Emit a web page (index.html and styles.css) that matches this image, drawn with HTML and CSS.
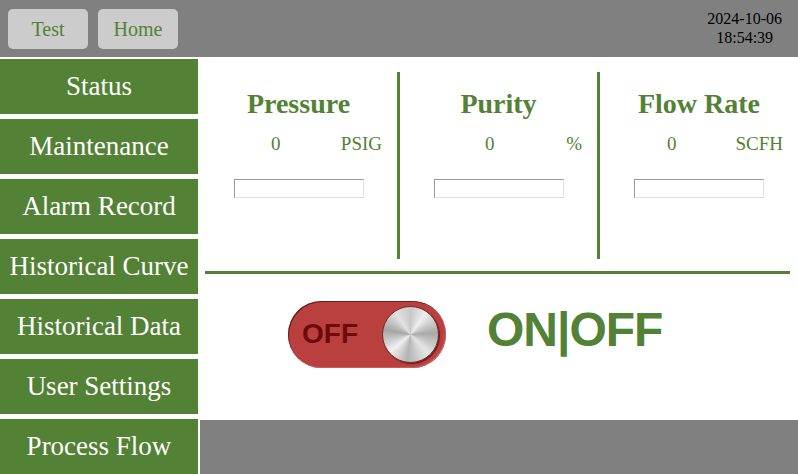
FILE: index.html
```html
<!DOCTYPE html>
<html>
<head>
<meta charset="utf-8">
<link rel="stylesheet" href="styles.css">
</head>
<body>
<div class="app">
  <header class="topbar">
    <div class="top-buttons">
      <button class="top-btn">Test</button>
      <button class="top-btn">Home</button>
    </div>
    <div class="clock">
      <div>2024-10-06</div>
      <div>18:54:39</div>
    </div>
  </header>
  <div class="body">
    <nav class="sidebar">
      <div class="nav-item">Status</div>
      <div class="nav-item">Maintenance</div>
      <div class="nav-item">Alarm Record</div>
      <div class="nav-item">Historical Curve</div>
      <div class="nav-item">Historical Data</div>
      <div class="nav-item">User Settings</div>
      <div class="nav-item">Process Flow</div>
    </nav>
    <main class="main">
      <div class="content">
        <div class="panels">
          <section class="panel panel--bordered">
            <h2 class="panel-title">Pressure</h2>
            <div class="readout readout--psig"><span>0</span><span>PSIG</span></div>
            <input class="field" type="text">
          </section>
          <section class="panel panel--bordered">
            <h2 class="panel-title">Purity</h2>
            <div class="readout readout--pct"><span>0</span><span>%</span></div>
            <input class="field" type="text">
          </section>
          <section class="panel">
            <h2 class="panel-title">Flow Rate</h2>
            <div class="readout readout--scfh"><span>0</span><span>SCFH</span></div>
            <input class="field" type="text">
          </section>
        </div>
        <div class="rule"></div>
        <div class="switch-row">
          <div class="switch">
            <span class="switch-label">OFF</span>
            <span class="knob"></span>
          </div>
          <div class="onoff">ON|OFF</div>
        </div>
      </div>
      <div class="footer"></div>
    </main>
  </div>
</div>
</body>
</html>
```
FILE: styles.css
```css
* { box-sizing: border-box; }
html, body { margin: 0; padding: 0; }
body {
  width: 798px;
  height: 474px;
  overflow: hidden;
  background: #ffffff;
  font-family: "Liberation Serif", "Times New Roman", serif;
}
.app {
  display: flex;
  flex-direction: column;
  height: 474px;
}
.topbar {
  height: 57px;
  background: #808080;
  display: flex;
  justify-content: space-between;
  align-items: flex-start;
  padding: 9px 16px 0 8px;
}
.top-buttons {
  display: flex;
  gap: 10px;
}
.top-btn {
  width: 80px;
  height: 40px;
  border: none;
  border-radius: 5px;
  background: #cccccc;
  color: #538135;
  font-family: "Liberation Serif", "Times New Roman", serif;
  font-size: 20px;
  padding: 0;
}
.clock {
  text-align: center;
  font-size: 16px;
  line-height: 19px;
  color: #000;
}
.body {
  flex: 1;
  display: flex;
  gap: 2px;
}
.sidebar {
  width: 198px;
  padding-top: 2px;
  display: flex;
  flex-direction: column;
  gap: 5px;
}
.nav-item {
  height: 55px;
  background: #538135;
  color: #ffffff;
  font-family: "Liberation Serif", "Times New Roman", serif;
  font-size: 27px;
  display: flex;
  align-items: center;
  justify-content: center;
  white-space: nowrap;
}
.main {
  flex: 1;
  display: flex;
  flex-direction: column;
}
.content {
  flex: 1;
  padding-top: 15px;
}
.panels {
  display: flex;
  height: 187px;
}
.panel {
  width: 198px;
  padding-top: 16px;
  display: flex;
  flex-direction: column;
  align-items: stretch;
}
.panel--bordered {
  width: 200px;
  border-right: 3px solid #538135;
}
.panel-title {
  margin: 0;
  font-size: 28px;
  line-height: 32px;
  font-weight: bold;
  color: #538135;
  text-align: center;
}
.readout {
  margin-top: 13px;
  display: flex;
  justify-content: space-between;
  font-size: 19px;
  line-height: 22px;
  color: #538135;
  padding-right: 15px;
}
.readout--psig { padding-left: 71px; }
.readout--pct { padding-left: 85px; }
.readout--scfh { padding-left: 67px; }
.field {
  align-self: center;
  margin-top: 24px;
  width: 130px;
  height: 19px;
  border: 1px solid;
  border-color: #999999 #dddddd #dddddd #999999;
  background: #ffffff;
  padding: 0;
}
.rule {
  margin: 12px 8px 0 5px;
  height: 3px;
  background: #538135;
}
.switch-row {
  margin-top: 27px;
  padding-left: 88px;
  display: flex;
  align-items: flex-start;
  gap: 41px;
}
.switch {
  position: relative;
  width: 158px;
  height: 67px;
  border-radius: 34px;
  background: #ba4040;
  box-shadow: inset 1px 1px 0 #6e1f1f, inset -1px -1px 0 #c86060;
}
.switch-label {
  position: absolute;
  left: 14px;
  top: 17px;
  font-family: "Liberation Sans", Arial, sans-serif;
  font-weight: bold;
  font-size: 28px;
  line-height: 32px;
  color: #6b0a0a;
}
.knob {
  position: absolute;
  left: 94px;
  top: 5px;
  width: 57px;
  height: 57px;
  border-radius: 50%;
  border: 1px solid #7a2a2a;
  background: conic-gradient(#c8c8c8, #eeeeee 10%, #a9a9a9 24%, #e6e6e6 38%, #b4b4b4 52%, #f0f0f0 64%, #a5a5a5 78%, #e2e2e2 90%, #c8c8c8);
  box-shadow: 1px 1px 1px #5a1a1a;
}
.onoff {
  margin-top: 5px;
  font-family: "Liberation Sans", Arial, sans-serif;
  font-weight: bold;
  font-size: 48px;
  line-height: 48px;
  letter-spacing: -1px;
  color: #538135;
}
.footer {
  height: 54px;
  background: #808080;
}
```
